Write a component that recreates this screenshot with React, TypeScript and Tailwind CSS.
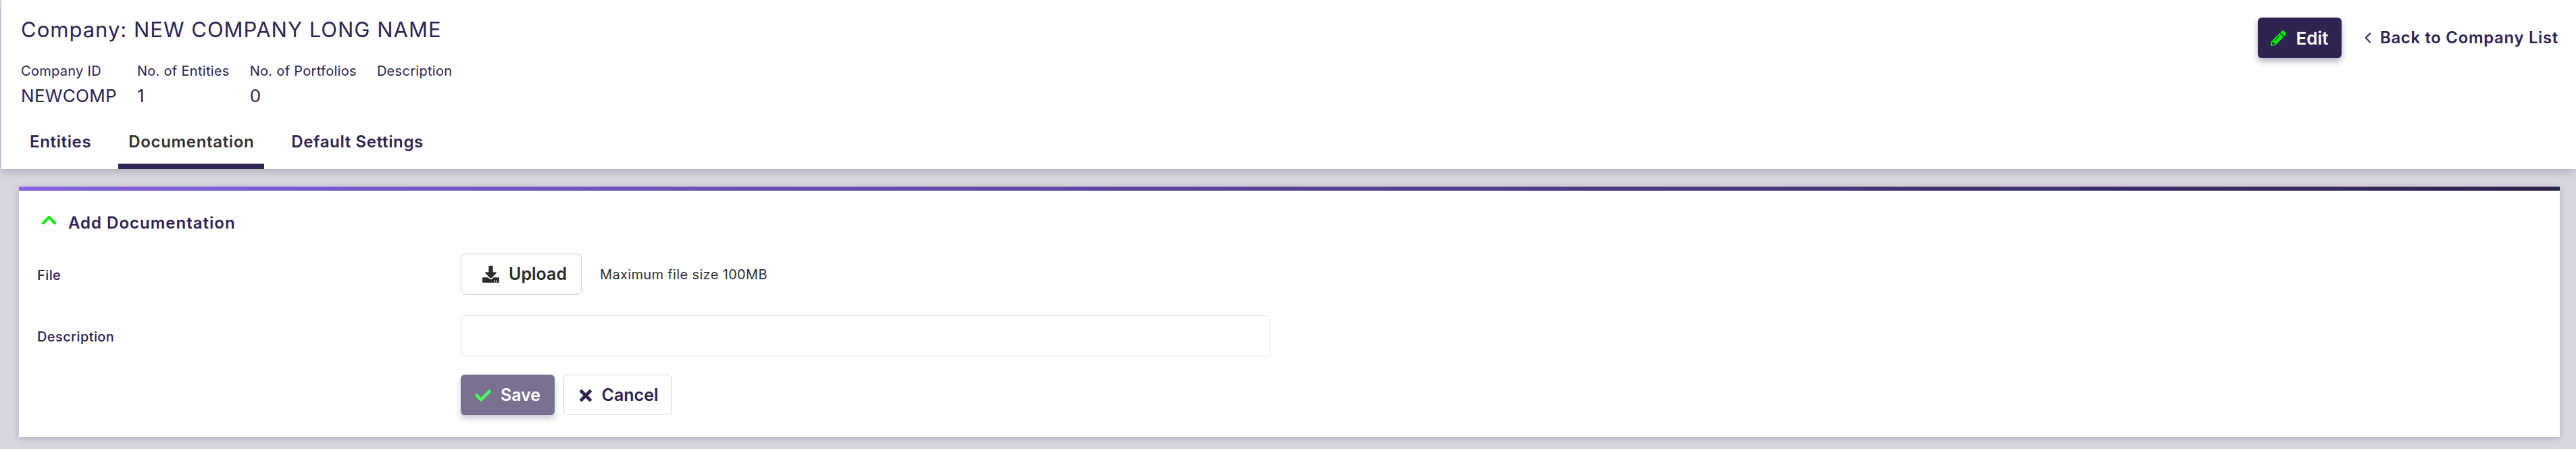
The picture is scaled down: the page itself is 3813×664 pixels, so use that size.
import React from 'react';
import { FaCheck, FaChevronUp, FaDownload, FaPencilAlt, FaTimes } from 'react-icons/fa';
import { ChevronLeft } from 'lucide-react';

const ink = 'text-[#2f2351]';

const App: React.FC = () => {
  const meta = [
    { label: 'Company ID', value: 'NEWCOMP' },
    { label: 'No. of Entities', value: '1' },
    { label: 'No. of Portfolios', value: '0' },
    { label: 'Description', value: '' },
  ];

  return (
    <div className={`h-screen overflow-hidden bg-[#d7d6de] pl-[2px] font-['Inter',sans-serif] ${ink}`}>
      <header className="relative z-10 flex h-[250px] justify-between bg-white pl-[29px] pr-[26px] shadow-[0_4px_12px_rgba(47,35,81,0.22)]">
        <div className="flex flex-col">
          <h1 className="mt-[25px] text-[31px] leading-[38px] font-normal tracking-[1px]">Company: NEW COMPANY LONG NAME</h1>
          <div className="mt-[29px] grid w-fit grid-cols-[auto_auto_auto_auto] gap-x-[30px]">
            {meta.map((m) => (
              <span key={m.label} className="text-[20px] leading-[26px] font-normal tracking-[0.3px]">{m.label}</span>
            ))}
            {meta.map((m) => (
              <span key={m.label} className="mt-[11px] h-[26px] text-[26px] leading-[26px] font-normal tracking-[0.3px]">{m.value}</span>
            ))}
          </div>
          <nav className="mt-auto -ml-[2px] flex gap-[25px] text-[24px] leading-[30px] font-semibold tracking-[0.65px]">
            <a className="px-[15px] pb-[25px]">Entities</a>
            <a className="border-b-[8px] border-[#2f2351] px-[15px] pb-[17px] text-[#33302f]">Documentation</a>
            <a className="px-[15px] pb-[25px]">Default Settings</a>
          </nav>
        </div>
        <div className="flex items-start pt-[26px]">
          <button className="flex h-[60px] w-[124px] items-center justify-center gap-[14px] rounded-[6px] bg-[#2f2351] text-[26px] font-semibold text-white shadow-[0_5px_10px_rgba(47,35,81,0.35)]">
            <FaPencilAlt className="size-[23px] text-[#00f000]" />
            Edit
          </button>
          <a className="ml-[26px] flex h-[60px] items-center gap-[5px] text-[24px] font-semibold tracking-[0.65px]">
            <ChevronLeft className="size-[26px]" strokeWidth={1.8} />
            Back to Company List
          </a>
        </div>
      </header>

      <main className="pl-[26px] pr-[24px] pt-[26px]">
        <section className="h-[370px] bg-white shadow-[0_2px_10px_rgba(47,35,81,0.22)]">
          <div className="h-[6px] bg-gradient-to-r from-[#8462e0] to-[#2f2351]" />
          <div className="flex h-[63px] items-end gap-[16px] pl-[32px]">
            <FaChevronUp className="mb-[7px] size-[25px] text-[#00f000]" />
            <h2 className="text-[24px] leading-[30px] font-semibold tracking-[1px]">Add Documentation</h2>
          </div>
          <div className="mt-[30px] flex h-[61px] items-center pl-[27px]">
            <label className="w-[627px] pt-[2px] text-[20px] font-medium tracking-[0.4px]">File</label>
            <button className="flex h-[61px] w-[179px] items-center justify-center gap-[14px] rounded-[6px] border border-[#d3d3da] bg-white pl-[10px] text-[25px] font-semibold text-[#2b2b2b]">
              <FaDownload className="size-[25px]" />
              Upload
            </button>
            <span className="ml-[27px] text-[20px] font-normal tracking-[0.35px] text-[#333333]">Maximum file size 100MB</span>
          </div>
          <div className="mt-[30px] flex h-[61px] items-center pl-[27px]">
            <label className="w-[627px] pt-[2px] text-[20px] font-medium tracking-[0.4px]">Description</label>
            <input className="h-[61px] w-[1198px] rounded-[6px] border border-[#e4e4e9] bg-white" />
          </div>
          <div className="mt-[27px] flex gap-[13px] pl-[654px]">
            <button className="flex h-[60px] w-[139px] items-center justify-center gap-[14px] rounded-[6px] bg-[#7a7190] pt-[1px] text-[25px] font-semibold text-white shadow-[0_5px_10px_rgba(47,35,81,0.25)]">
              <FaCheck className="size-[24px] text-[#4dfb60]" />
              Save
            </button>
            <button className="flex h-[60px] w-[160px] items-center justify-center gap-[11px] rounded-[6px] border border-[#d3d3da] bg-white pt-[1px] text-[25px] font-semibold">
              <FaTimes className="size-[26px]" />
              Cancel
            </button>
          </div>
        </section>
      </main>
    </div>
  );
};

export default App;
